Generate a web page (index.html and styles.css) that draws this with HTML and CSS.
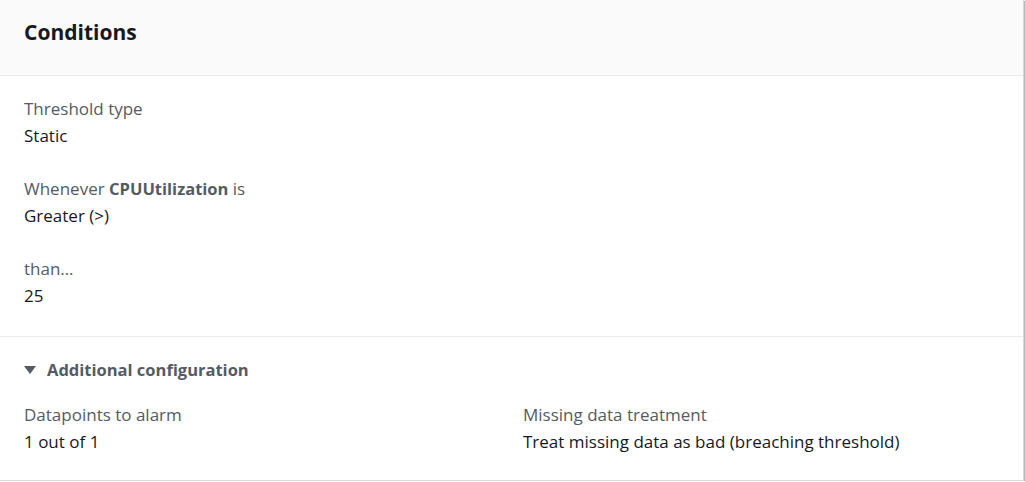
FILE: index.html
```html
<!DOCTYPE html>
<html>
<head>
<meta charset="utf-8">
<link rel="stylesheet" href="styles.css">
</head>
<body>
<div class="card">
  <div class="card-header"><h2 class="title">Conditions</h2></div>
  <div class="section">
    <div class="field">
      <div class="label">Threshold type</div>
      <div class="value">Static</div>
    </div>
    <div class="field">
      <div class="label">Whenever <b class="strong">CPUUtilization</b> is</div>
      <div class="value">Greater (&gt;)</div>
    </div>
    <div class="field">
      <div class="label">than…</div>
      <div class="value">25</div>
    </div>
  </div>
  <div class="section section-extra">
    <div class="expander">
      <svg class="caret" width="12" height="8" viewBox="0 0 12 8"><path d="M0 0 H12 L6 8 Z" fill="#545b64"/></svg>
      <span>Additional configuration</span>
    </div>
    <div class="grid">
      <div class="field">
        <div class="label">Datapoints to alarm</div>
        <div class="value">1 out of 1</div>
      </div>
      <div class="field">
        <div class="label">Missing data treatment</div>
        <div class="value">Treat missing data as bad (breaching threshold)</div>
      </div>
    </div>
  </div>
</div>
</body>
</html>
```
FILE: styles.css
```css
html, body {
  margin: 0;
  padding: 0;
  background: #ffffff;
}
body {
  font-family: "Open Sans", "Noto Sans", sans-serif;
  font-size: 17px;
  color: #16191f;
}
.card {
  width: 1024px;
  height: 481px;
  box-sizing: border-box;
  border-right: 1px solid #d5dbdb;
  border-bottom: 1px solid #d5dbdb;
  box-shadow: 1px 1px 1px rgba(0, 28, 36, 0.3);
  background: #fff;
  display: flex;
  flex-direction: column;
}
.card-header {
  background: #fafafa;
  border-bottom: 1px solid #eaeded;
  height: 76px;
  box-sizing: border-box;
  padding: 19px 24px 0;
}
.title {
  margin: 0;
  font-size: 21px;
  line-height: 26px;
  font-weight: 700;
  color: #16191f;
}
.section {
  padding: 20px 24px 27px;
  display: flex;
  flex-direction: column;
  gap: 27px;
  border-bottom: 1px solid #eaeded;
}
.section-extra {
  border-bottom: none;
  gap: 19px;
  padding-top: 20px;
  padding-bottom: 0;
}
.field {
  display: flex;
  flex-direction: column;
  gap: 1px;
}
.label {
  color: #545b64;
  line-height: 26px;
}
.strong {
  color: #545b64;
  font-weight: 700;
  font-size: 16.5px;
}
.value {
  line-height: 26px;
}
.expander {
  display: flex;
  align-items: center;
  gap: 11px;
  font-weight: 700;
  font-size: 16.5px;
  color: #545b64;
  line-height: 26px;
}
.grid {
  display: grid;
  grid-template-columns: 1fr 1fr;
  column-gap: 23px;
}
```
